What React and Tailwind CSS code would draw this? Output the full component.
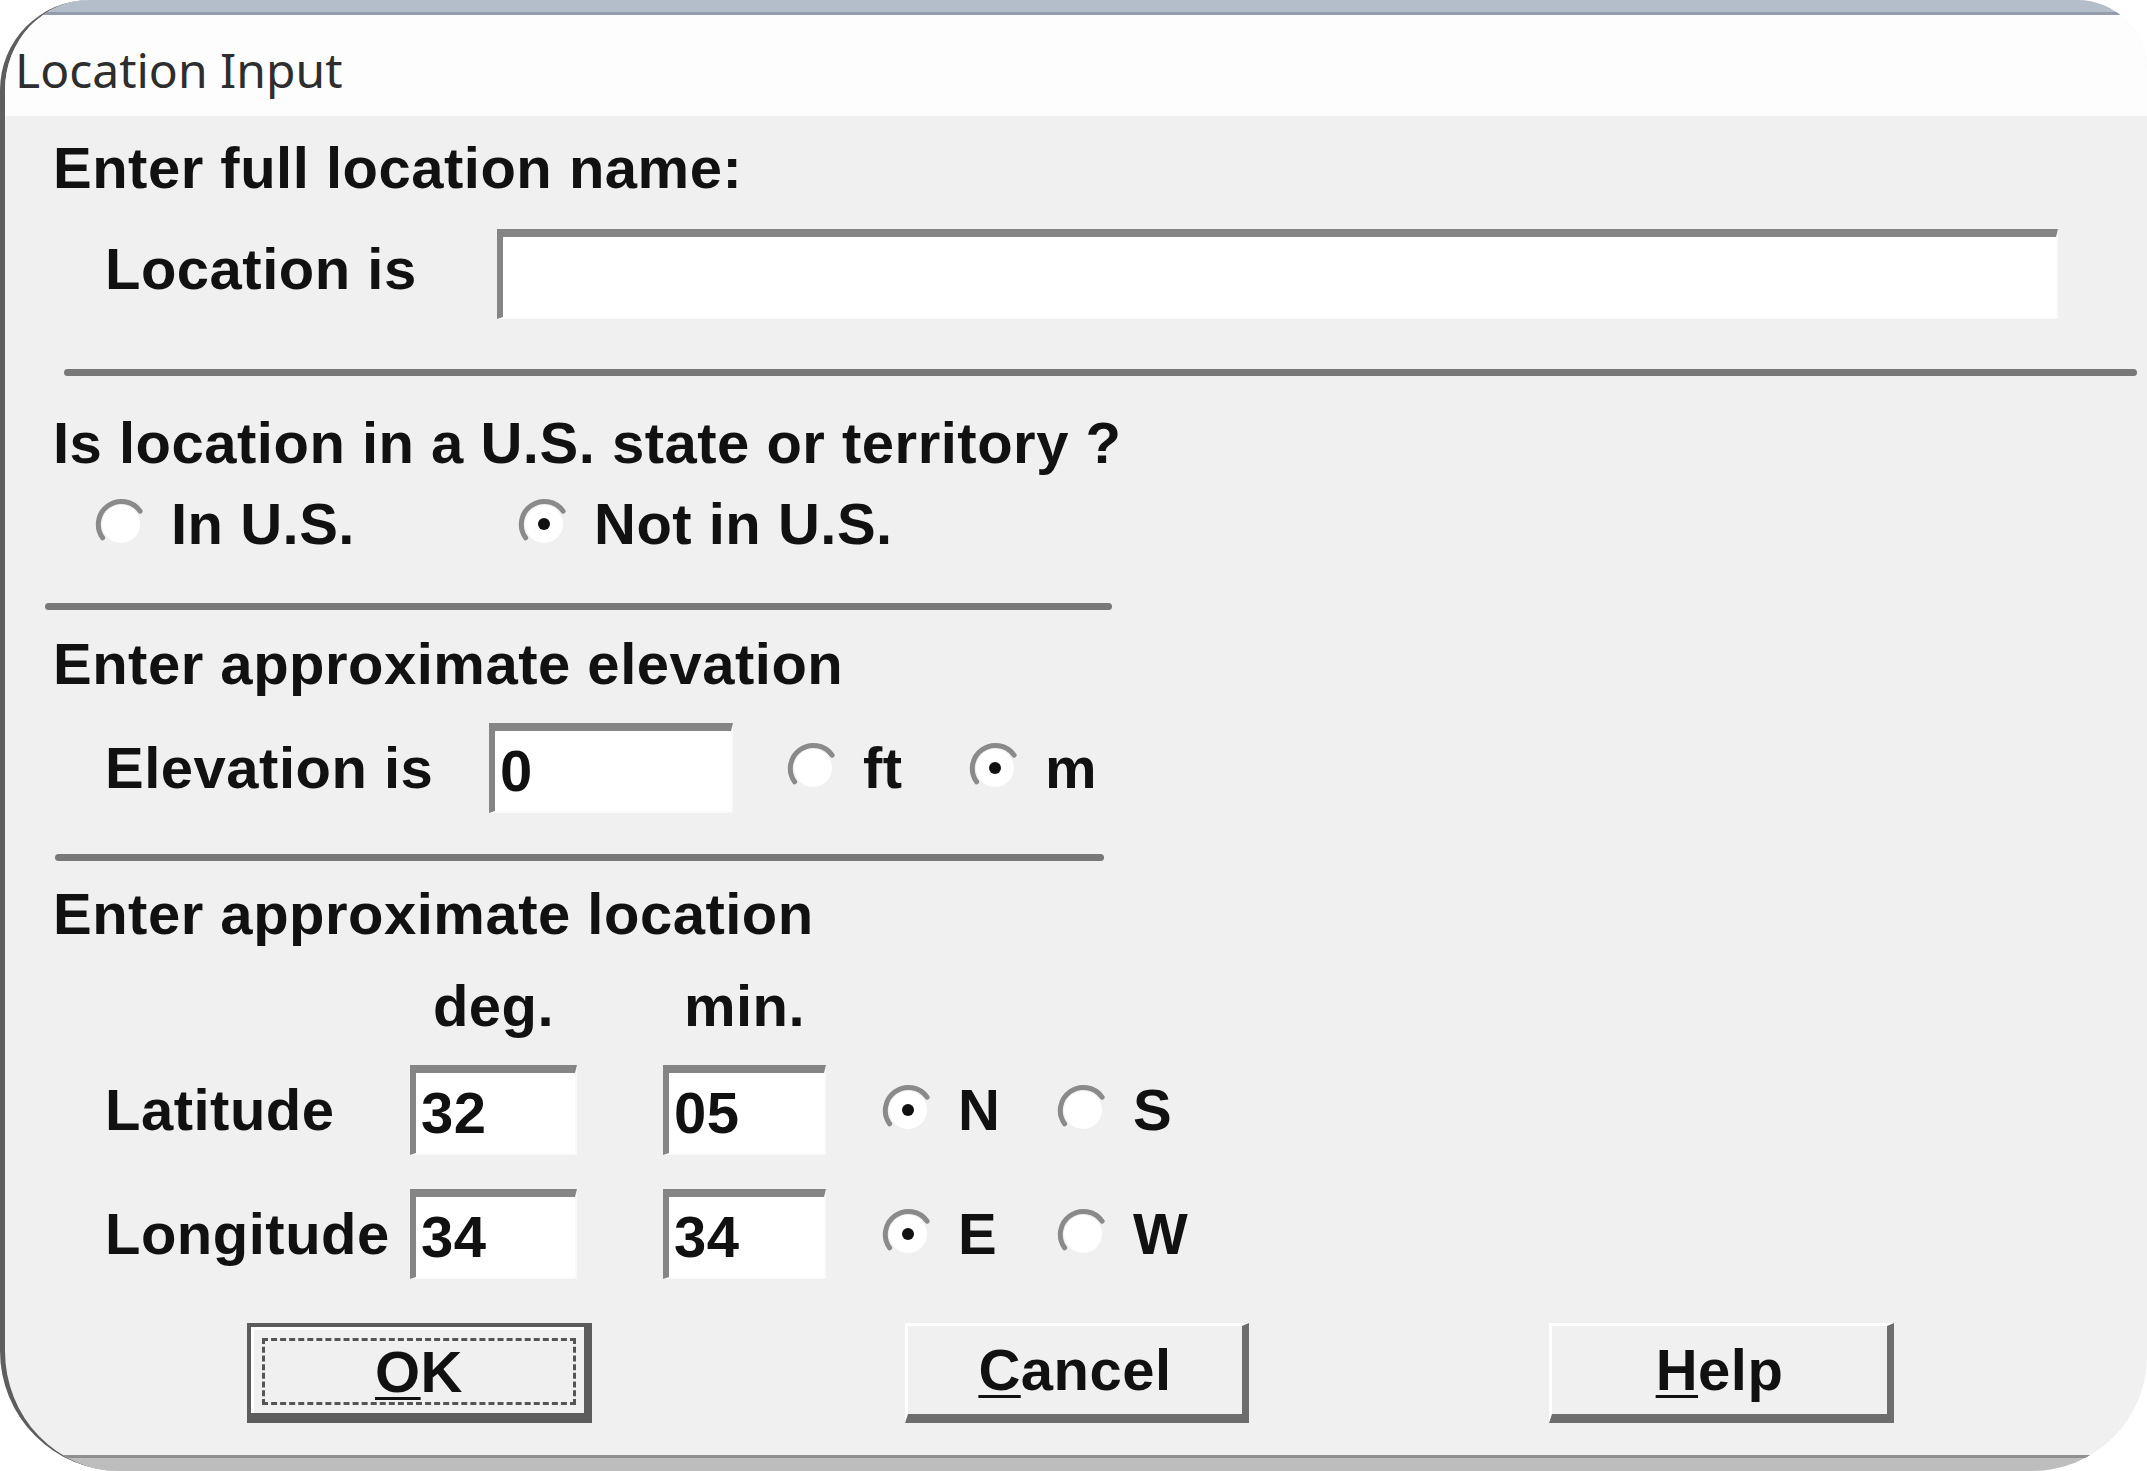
import React from 'react';

// classic radio: grey arc top-left, white well, black dot when checked
function Radio({ checked }) {
  return (
    <svg width="52" height="52" viewBox="0 0 52 52" className="shrink-0">
      <circle cx="26" cy="26" r="19" fill="#ffffff" />
      <path d="M7.6 39.8 A23 23 0 1 1 45.1 13.1" fill="none" stroke="#8a8a8a" strokeWidth="5" strokeLinecap="round" />
      {checked && <circle cx="26" cy="26" r="6" fill="#111111" />}
    </svg>
  );
}

function RadioItem({ checked, label, width }) {
  return (
    <div className={`flex items-center ${width}`}>
      <Radio checked={checked} />
      <span className="ml-[24px]">{label}</span>
    </div>
  );
}

function Field({ value, width }) {
  return (
    <div
      className={`${width} h-[90px] shrink-0 flex items-center bg-white pl-[5px] border-solid border-t-[8px] border-l-[6px] border-r-2 border-b-2 border-t-[#858585] border-l-[#858585] border-r-[#fafafa] border-b-[#fafafa]`}
    >
      {value}
    </div>
  );
}

function Separator({ className }) {
  return <div className={`h-[7px] shrink-0 bg-[#787878] rounded-full ${className}`} />;
}

function Button({ first, rest, isDefault, width }) {
  const label = (
    <span>
      <span className="underline decoration-[3px] underline-offset-[5px]">{first}</span>
      {rest}
    </span>
  );
  if (isDefault) {
    return (
      <div className={`${width} h-[100px] shrink-0 flex border-solid border-t-4 border-l-4 border-r-[8px] border-b-[10px] border-[#5c5c5c] bg-[#f0f0f0]`}>
        <div className="flex-1 flex p-[8px] border-solid border-t-[3px] border-l-[3px] border-white">
          <div className="flex-1 flex items-center justify-center border-[3px] border-dashed border-[#555]">
            {label}
          </div>
        </div>
      </div>
    );
  }
  return (
    <div className={`${width} h-[100px] shrink-0 flex items-center justify-center bg-[#f0f0f0] border-solid border-t-[3px] border-l-[3px] border-r-[7px] border-b-[9px] border-t-white border-l-white border-r-[#6d6d6d] border-b-[#6d6d6d]`}>
      {label}
    </div>
  );
}

export default function App() {
  return (
    <div className="min-h-screen bg-white">
      <div className="w-[2147px] h-[1471px] flex flex-col overflow-hidden rounded-tl-[90px] rounded-tr-[70px] rounded-bl-[120px] rounded-br-[115px] border-l-[5px] border-[#5e5e5e] bg-[#f0f0f0]">
        {/* window frame top */}
        <div className="h-[15px] shrink-0 bg-[#b4bdca] border-b-[3px] border-[#939cab]" />

        {/* title bar */}
        <div className="h-[101px] shrink-0 flex items-center pl-[10px] pt-[9px] bg-[#fdfdfd] font-['Noto_Sans',sans-serif] text-[48px] leading-none text-[#2e2e2e]">
          Location Input
        </div>

        {/* dialog body */}
        <div className="flex-1 flex flex-col font-['Liberation_Sans',Arial,sans-serif] font-bold text-[58px] leading-none tracking-[0.5px] text-[#111]">
          <div className="mt-[23px] h-[58px] flex items-center pl-[48px]">Enter full location name:</div>

          <div className="mt-[32px] h-[90px] flex items-center pl-[100px]">
            <span className="w-[392px] shrink-0 mb-[10px]">Location is</span>
            <Field value="" width="w-[1561px]" />
          </div>

          <Separator className="mt-[50px] ml-[59px] mr-[10px]" />

          <div className="mt-[38px] h-[58px] flex items-center pl-[48px]">Is location in a U.S. state or territory ?</div>

          <div className="mt-[23px] h-[58px] flex items-center pl-[90px]">
            <RadioItem checked={false} label="In U.S." width="w-[423px]" />
            <RadioItem checked label="Not in U.S." width="" />
          </div>

          <Separator className="mt-[50px] ml-[40px] w-[1067px]" />

          <div className="mt-[25px] h-[58px] flex items-center pl-[48px]">Enter approximate elevation</div>

          <div className="mt-[30px] h-[90px] flex items-center pl-[100px]">
            <span className="w-[384px] shrink-0">Elevation is</span>
            <Field value="0" width="w-[244px]" />
            <div className="ml-[54px] flex items-center">
              <RadioItem checked={false} label="ft" width="w-[182px]" />
              <RadioItem checked label="m" width="" />
            </div>
          </div>

          <Separator className="mt-[41px] ml-[50px] w-[1049px]" />

          <div className="mt-[24px] h-[58px] flex items-center pl-[48px]">Enter approximate location</div>

          <div className="mt-[34px] h-[58px] flex items-center pl-[405px]">
            <span className="w-[167px] text-center">deg.</span>
            <span className="ml-[86px] w-[163px] text-center">min.</span>
          </div>

          <div className="mt-[30px] h-[90px] flex items-center pl-[100px]">
            <span className="w-[305px] shrink-0">Latitude</span>
            <Field value="32" width="w-[167px]" />
            <div className="ml-[86px]">
              <Field value="05" width="w-[163px]" />
            </div>
            <div className="ml-[56px] flex items-center">
              <RadioItem checked label="N" width="w-[175px]" />
              <RadioItem checked={false} label="S" width="" />
            </div>
          </div>

          <div className="mt-[34px] h-[90px] flex items-center pl-[100px]">
            <span className="w-[305px] shrink-0">Longitude</span>
            <Field value="34" width="w-[167px]" />
            <div className="ml-[86px]">
              <Field value="34" width="w-[163px]" />
            </div>
            <div className="ml-[56px] flex items-center">
              <RadioItem checked label="E" width="w-[175px]" />
              <RadioItem checked={false} label="W" width="" />
            </div>
          </div>

          <div className="mt-[44px] flex items-center pl-[242px]">
            <Button first="O" rest="K" isDefault width="w-[345px]" />
            <div className="ml-[313px]">
              <Button first="C" rest="ancel" width="w-[344px]" />
            </div>
            <div className="ml-[300px]">
              <Button first="H" rest="elp" width="w-[345px]" />
            </div>
          </div>
        </div>

        {/* window frame bottom */}
        <div className="h-[16px] shrink-0 bg-[#bdbdbd] border-t-[3px] border-[#8f8f8f]" />
      </div>
    </div>
  );
}
